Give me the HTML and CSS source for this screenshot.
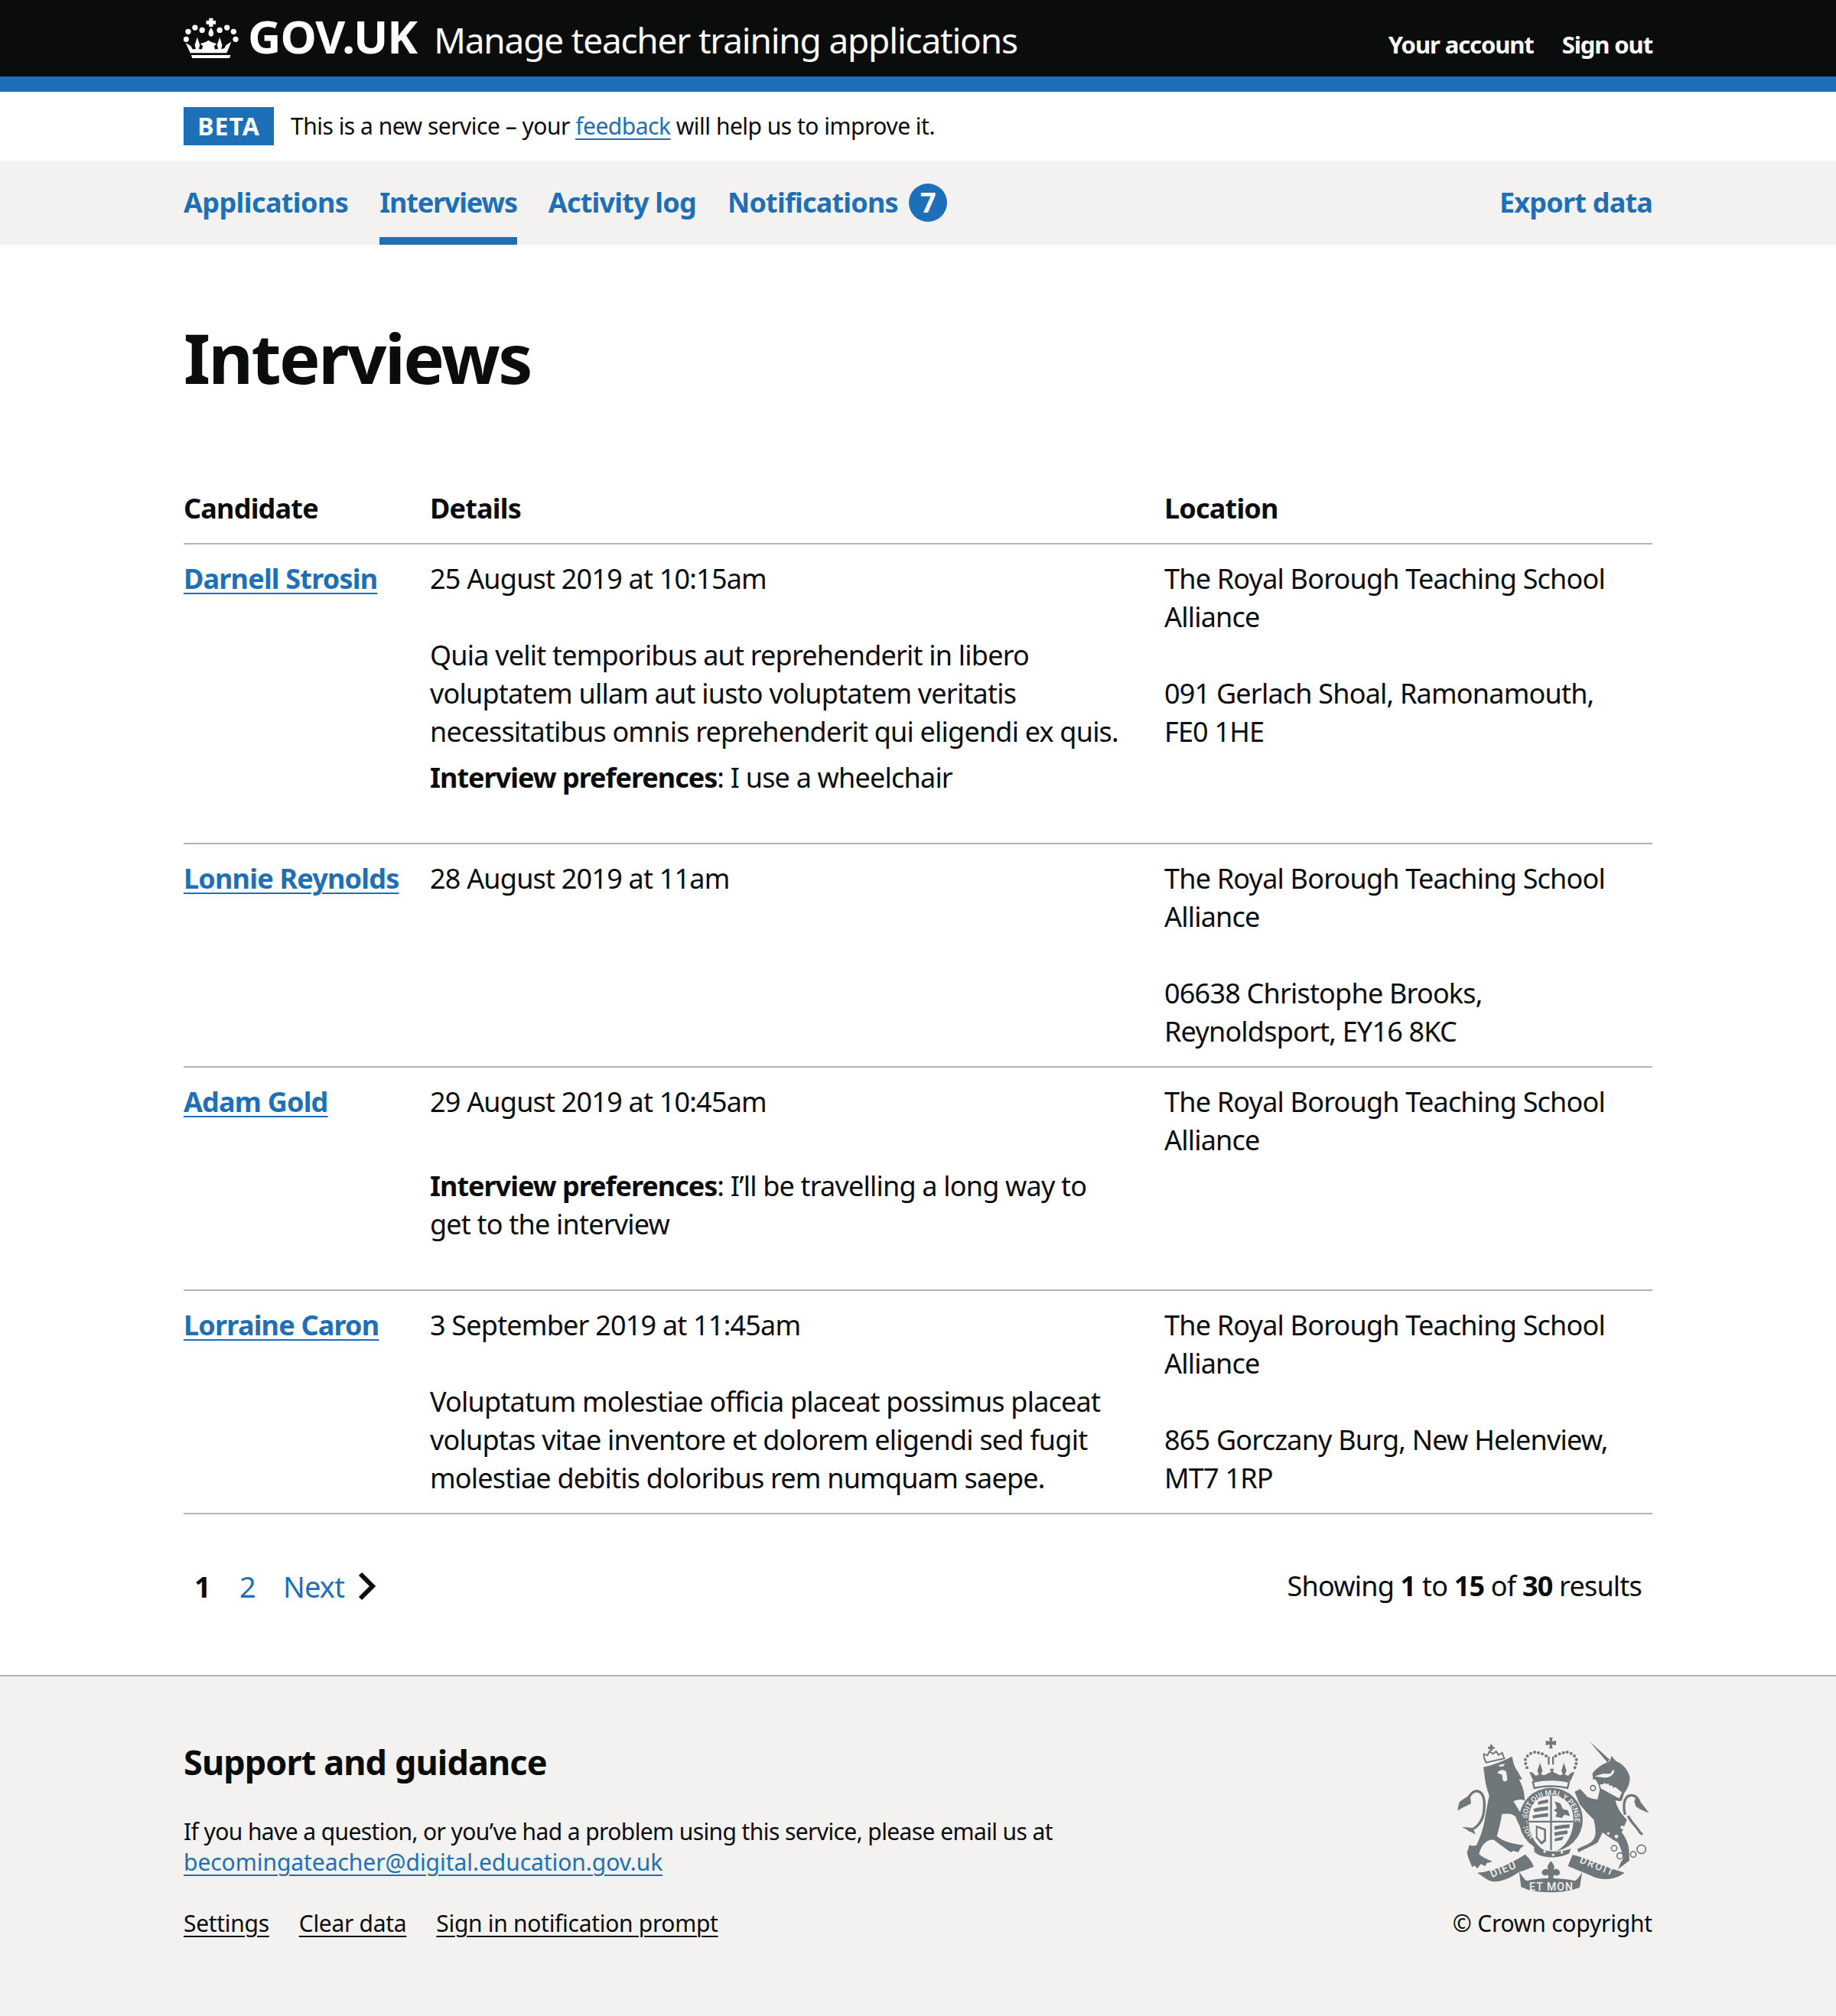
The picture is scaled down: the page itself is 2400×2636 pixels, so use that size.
FILE: index.html
```html
<!DOCTYPE html>
<html lang="en">
<head>
  <meta charset="UTF-8">
  <title>Interviews</title>
  <link rel="stylesheet" href="styles.css">
</head>
<body>
  <header class="site-header">
    <div class="wrap header-row">
      <div class="logo">
        <svg class="crown" viewBox="60 30 220 165" width="73" height="55" fill="#fff">
          <path d="M160 35h16v10h11v14h-11v10h-16V59h-11V45h11z"/>
          <path d="M168 72c8 12 10 18 10 24 0 7-5 11-10 11s-10-4-10-11c0-6 2-12 10-24z"/>
          <circle cx="78" cy="88" r="11"/><circle cx="105" cy="72" r="11"/><circle cx="133" cy="82" r="11"/>
          <circle cx="202" cy="82" r="11"/><circle cx="231" cy="72" r="11"/><circle cx="257" cy="88" r="11"/>
          <circle cx="70" cy="118" r="11"/><circle cx="265" cy="118" r="11"/>
          <path d="M68 132l20 12 8 14 12-2-4-16 10-30 10 30-4 16 12 2 4-12-10-10 22-8 10-6 10 6 22 8-10 10 4 12 12-2-4-16 10-30 10 30-4 16 12-2 8-14 20-12-18 44H86z"/>
          <path d="M90 180h155l-4 12H94z"/>
        </svg>
        <span class="logo-text">GOV.UK</span>
        <span class="service-name">Manage teacher training applications</span>
      </div>
      <nav class="account-links">
        <a href="#">Your account</a>
        <a href="#">Sign out</a>
      </nav>
    </div>
  </header>
  <div class="blue-bar"></div>

  <div class="wrap phase-banner">
    <strong class="tag">BETA</strong>
    <span>This is a new service – your <a href="#">feedback</a> will help us to improve it.</span>
  </div>

  <nav class="primary-nav">
    <div class="wrap nav-row">
      <ul class="nav-list">
        <li><a href="#">Applications</a></li>
        <li class="current"><a href="#">Interviews</a></li>
        <li><a href="#">Activity log</a></li>
        <li><a href="#">Notifications</a><span class="count">7</span></li>
      </ul>
      <a class="nav-export" href="#">Export data</a>
    </div>
  </nav>

  <main class="wrap">
    <h1>Interviews</h1>
    <table class="interviews">
      <thead>
        <tr><th class="col-a">Candidate</th><th class="col-b">Details</th><th class="col-c">Location</th></tr>
      </thead>
      <tbody>
        <tr class="row-one">
          <td><a class="name" href="#">Darnell Strosin</a></td>
          <td>
            <p>25 August 2019 at 10:15am</p>
            <p>Quia velit temporibus aut reprehenderit in libero voluptatem ullam aut iusto voluptatem veritatis necessitatibus omnis reprehenderit qui eligendi ex quis.</p>
            <p class="prefs"><strong>Interview preferences</strong>: I use a wheelchair</p>
          </td>
          <td>
            <p>The Royal Borough Teaching School Alliance</p>
            <p>091 Gerlach Shoal, Ramonamouth, FE0 1HE</p>
          </td>
        </tr>
        <tr>
          <td><a class="name" href="#">Lonnie Reynolds</a></td>
          <td><p>28 August 2019 at 11am</p></td>
          <td>
            <p>The Royal Borough Teaching School Alliance</p>
            <p>06638 Christophe Brooks, Reynoldsport, EY16 8KC</p>
          </td>
        </tr>
        <tr class="row-three">
          <td><a class="name" href="#">Adam Gold</a></td>
          <td>
            <p>29 August 2019 at 10:45am</p>
            <p class="prefs-gap"><strong>Interview preferences</strong>: I’ll be travelling a long way to get to the interview</p>
          </td>
          <td><p>The Royal Borough Teaching School Alliance</p></td>
        </tr>
        <tr>
          <td><a class="name" href="#">Lorraine Caron</a></td>
          <td>
            <p>3 September 2019 at 11:45am</p>
            <p>Voluptatum molestiae officia placeat possimus placeat voluptas vitae inventore et dolorem eligendi sed fugit molestiae debitis doloribus rem numquam saepe.</p>
          </td>
          <td>
            <p>The Royal Borough Teaching School Alliance</p>
            <p>865 Gorczany Burg, New Helenview, MT7 1RP</p>
          </td>
        </tr>
      </tbody>
    </table>

    <div class="pagination">
      <div class="pages">
        <span class="page-current">1</span>
        <a href="#">2</a>
        <a href="#">Next</a>
        <svg class="chevron" width="24" height="38" viewBox="0 0 24 38" fill="none" stroke="#0b0c0c" stroke-width="6"><path d="M3 3l16 16L3 35"/></svg>
      </div>
      <p class="results">Showing <strong>1</strong> to <strong>15</strong> of <strong>30</strong> results</p>
    </div>
  </main>

  <footer class="site-footer">
    <div class="wrap footer-row">
      <div class="footer-main">
        <h2>Support and guidance</h2>
        <p>If you have a question, or you’ve had a problem using this service, please email us at<br><a class="email" href="#">becomingateacher@digital.education.gov.uk</a></p>
        <ul class="footer-links">
          <li><a href="#">Settings</a></li>
          <li><a href="#">Clear data</a></li>
          <li><a href="#">Sign in notification prompt</a></li>
        </ul>
      </div>
      <div class="footer-crest">
        <svg class="crest" width="250" height="204" viewBox="130 95 750 612" fill="#6f777b">
          <!-- big crown -->
          <path d="M490 97h14l-3 16 16-3v18l-16-3 3 16h-14l3-16-16 3v-18l16 3z"/>
          <path d="M485 172h7v32h-7zM502 172h7v32h-7z"/>
          <g>
            <circle cx="398" cy="200" r="6"/><circle cx="397" cy="184" r="6"/><circle cx="405" cy="170" r="6"/><circle cx="418" cy="160" r="6"/><circle cx="433" cy="155" r="6"/><circle cx="448" cy="157" r="6"/><circle cx="463" cy="162" r="6"/><circle cx="478" cy="170" r="6"/>
            <circle cx="596" cy="200" r="6"/><circle cx="597" cy="184" r="6"/><circle cx="589" cy="170" r="6"/><circle cx="576" cy="160" r="6"/><circle cx="561" cy="155" r="6"/><circle cx="546" cy="157" r="6"/><circle cx="531" cy="162" r="6"/><circle cx="516" cy="170" r="6"/>
            <circle cx="403" cy="216" r="6"/><circle cx="591" cy="216" r="6"/>
          </g>
          <path d="M412 232l14 4 12 12 12-6-6-14 10-32 10 32-6 14 12 4 28-14-6-12h18l-6 12 28 14 12-4-6-14 10-32 10 32-6 14 12 6 12-12 14-4-16 36H428z"/>
          <path d="M426 272c40-12 102-12 142 0l-6 24c-38-10-92-10-130 0z" fill="#f3f2f1" stroke="#6f777b" stroke-width="7"/>
          <!-- garter and shield -->
          <circle cx="497" cy="420" r="125"/>
          <path d="M497 325c53 0 88 35 88 95 0 70-40 120-88 130-47-10-87-60-87-130 0-60 35-95 87-95z" fill="#f3f2f1"/>
          <path d="M494 325h7v215h-7zM410 424h175v7H410z"/>
          <path d="M446 350c14-6 26-8 40-10v14c-14 2-28 4-38 8zM428 378c20-8 40-8 58-10v14c-18 2-38 6-54 8zM424 404c20-6 44-8 62-10v14c-20 2-42 4-58 8z"/>
          <path d="M512 348l22 8 10 22 20 6 8 22-22-6-10 14-26-6 8-16-14-8 12-10z"/>
          <path d="M438 442l40 14v48l-18 14-22-26z"/>
          <path d="M444 452l26 10v36l-10 8-16-18z" fill="#f3f2f1"/>
          <path d="M510 446c18-4 40-6 60-8v14c-20 2-40 4-58 8zM510 470c18-4 38-6 52-8v14c-16 2-34 4-50 8zM512 494c14-4 26-6 36-8l-8 14c-10 2-20 2-28 6z"/>
          <path id="garter" d="M432 484A93 93 0 1 1 562 484" fill="none"/>
          <text font-family="Roboto, sans-serif" font-size="29" font-weight="500" fill="#f3f2f1"><textPath href="#garter">HONI SOIT QUI MAL Y PENSE</textPath></text>
          <path d="M430 518c35 30 100 34 145 16l-6 18c-40 22-110 22-137-6z"/>
          <g fill="#f3f2f1"><circle cx="472" cy="545" r="5"/><circle cx="506" cy="558" r="5"/><circle cx="540" cy="548" r="5"/></g>
          <!-- lion -->
          <path d="M243 196c-6-12-11-22-9-34l14 6 8-16 14 10 12-10 10 14 14-8 8 22z" fill="none" stroke="#6f777b" stroke-width="6"/>
          <path d="M258 126h10v8h8v8h-8v8h-10v-8h-8v-8h8z"/>
          <path d="M232 214C270 205 310 190 345 172 350 195 352 210 365 228L385 262H372C385 285 392 305 395 345 385 340 370 338 350 348L405 436 398 452 372 440 358 408C345 395 325 395 305 398 300 430 292 460 285 485 310 505 345 515 392 520L378 532 368 548 350 542 340 548C320 535 300 520 275 500 255 495 245 505 230 520 222 530 218 545 215 555 232 570 250 575 268 585L245 590 240 602 222 594 208 612 198 600 188 606C180 585 170 565 168 548L178 518C188 525 198 522 205 520 225 480 235 440 240 405 245 375 250 350 255 325 245 300 238 270 236 240z"/>
          <path d="M290 232c10-10 25-10 32 0l4 30c-4 10-14 10-18 2l-2-18c-6-6-11-8-18-6zM292 206l24-6-4 10-16 2z" fill="#f3f2f1"/>
          <path d="M232 400c8-40 6-86-22-92-20-4-30 17-45 37" fill="none" stroke="#6f777b" stroke-width="10"/>
          <path d="M180 322c-14 10-34 20-42 30-4 10-6 22-6 34 14-14 36-20 52-30z"/>
          <path d="M232 400c-6 30-30 58-58 62" fill="none" stroke="#6f777b" stroke-width="10"/>
          <path d="M190 452l-42-4 28 16 26 14z"/>
          <!-- unicorn -->
          <path d="M648 112l80 73-10 10z"/>
          <path d="M660 238C672 222 690 205 728 190L735 170 752 190C775 200 795 215 806 250 808 275 800 295 785 315L775 345C765 350 758 345 750 345 755 370 770 395 795 420 788 440 780 455 775 470 790 490 800 510 803 535L805 580 785 595 760 615 770 590 782 570C775 545 768 525 760 510 745 500 725 490 700 470L680 510C655 525 630 535 605 548L600 535C620 525 640 518 652 510 665 500 672 485 672 470 672 450 668 435 665 420L640 395 610 360 590 310 612 300 640 330C655 338 670 340 680 340L690 295 672 262H662z"/>
          <path d="M668 250l32-10h30l12-18 3 10c-7 16-20 23-40 23z" fill="#f3f2f1"/>
          <path d="M686 280l16-2 4-8 8 8 10-4 4 10 10-2 4 10 10-2 26 22-12 28-76-42z" fill="#f3f2f1" stroke="#6f777b" stroke-width="5"/>
          <path d="M788 400c-8-26-6-56 8-70 16-12 36-6 48 20" fill="none" stroke="#6f777b" stroke-width="10"/>
          <path d="M830 332c18 14 34 40 52 62-20-8-36-14-52-26l-6-20z"/>
          <path d="M800 405c10 25 36 45 46 65l10 8" fill="none" stroke="#6f777b" stroke-width="10"/>
          <g fill="none" stroke="#6f777b" stroke-width="5">
            <circle cx="662" cy="296" r="10"/><circle cx="652" cy="380" r="11"/>
            <circle cx="745" cy="532" r="11"/><circle cx="768" cy="562" r="12"/><circle cx="820" cy="556" r="11"/><circle cx="852" cy="536" r="17"/>
          </g>
          <g fill="#f3f2f1"><circle cx="777" cy="450" r="7"/><circle cx="754" cy="486" r="7"/><circle cx="722" cy="474" r="5"/></g>
          <!-- motto ribbon -->
          <path d="M208 628c70-6 130-36 188-72 16 14 28 32 34 48l-40 16-16 4c-40 30-100 52-128 30z"/>
          <path d="M372 622c8 14 20 30 30 38 60-14 130-14 190 0 12-10 22-22 28-36l-10 62-30 10c-50 12-120 12-170 0l-30-12z"/>
          <path d="M582 558c60 14 130 50 204 70-40 30-90 32-130 12l-92-38c6-16 12-30 18-44z"/>
          <path d="M497 582c14 16 16 24 10 34 10-6 24-2 26 12-4 12-14 14-24 8l-4 18h-16l-4-18c-10 6-20 4-24-8 2-14 16-18 26-12-6-10-4-18 10-34z"/>
          <g font-family="Roboto, sans-serif" font-weight="500" fill="#f3f2f1">
            <text x="266" y="648" font-size="42" textLength="104" transform="rotate(-22 266 648)">DIEU</text>
            <text x="412" y="697" font-size="42" textLength="171">ET MON</text>
            <text x="608" y="588" font-size="40" textLength="138" transform="rotate(22 608 588)">DROIT</text>
          </g>
        </svg>
        <p>© Crown copyright</p>
      </div>
    </div>
  </footer>
</body>
</html>
```

FILE: styles.css
```css
/* page */
body {
  margin: 0;
  min-height: 100vh;
  display: flex;
  flex-direction: column;
  font-family: "Noto Sans", Arial, sans-serif;
  font-size: 36px;
  line-height: 50px;
  letter-spacing: -0.8px;
  color: #0b0c0c;
  background: #fff;
}

a {
  color: #1d70b8;
  text-decoration-thickness: 2px;
  text-underline-offset: 5px;
}

p {
  margin: 0;
}

.wrap {
  width: 1920px;
  margin: 0 auto;
}

/* header */
.site-header {
  background: #0b0c0c;
  height: 100px;
  color: #fff;
}

.header-row {
  display: flex;
  justify-content: space-between;
  height: 100px;
}

.logo {
  display: flex;
  align-items: baseline;
  padding-top: 10px;
}

.crown {
  align-self: flex-start;
  margin: 12px 11px 0 0;
}

.logo-text {
  font-size: 60px;
  line-height: 75px;
  font-weight: 700;
  letter-spacing: -1px;
  margin-right: 22px;
}

.service-name {
  font-size: 46px;
  line-height: 75px;
  letter-spacing: -1.2px;
}

.account-links {
  display: flex;
  gap: 37px;
  padding-top: 33px;
}

.account-links a {
  color: #fff;
  font-size: 31px;
  line-height: 50px;
  font-weight: 700;
  letter-spacing: -1.1px;
  text-decoration: none;
}

.blue-bar {
  height: 20px;
  background: #1d70b8;
}

/* phase banner */
.phase-banner {
  display: flex;
  align-items: center;
  gap: 22px;
  height: 90px;
  font-size: 30px;
  letter-spacing: -0.5px;
}

.tag {
  background: #1d70b8;
  color: #fff;
  width: 118px;
  height: 50px;
  line-height: 50px;
  text-align: center;
  letter-spacing: 1px;
  font-size: 32px;
}

/* primary nav */
.primary-nav {
  background: #f3f2f1;
  height: 110px;
}

.nav-row {
  display: flex;
  justify-content: space-between;
  height: 110px;
}

.nav-list {
  display: flex;
  gap: 41px;
  margin: 0;
  padding: 0;
  list-style: none;
}

.nav-list li {
  display: flex;
  align-items: center;
  height: 110px;
}

.nav-list li:first-child {
  letter-spacing: -0.6px;
}

.nav-list a,
.nav-export {
  font-weight: 700;
  text-decoration: none;
}

.nav-export {
  line-height: 110px;
}

.nav-list .current {
  box-shadow: inset 0 -10px 0 #1d70b8;
  letter-spacing: -1.2px;
}

.count {
  width: 50px;
  height: 50px;
  margin-left: 14px;
  border-radius: 50%;
  background: #1d70b8;
  color: #fff;
  font-weight: 700;
  text-align: center;
}

/* main */
h1 {
  margin: 0;
  padding: 97px 0 103px;
  font-size: 90px;
  line-height: 100px;
  font-weight: 700;
  letter-spacing: -2.5px;
}

.interviews {
  width: 100%;
  table-layout: fixed;
  border-collapse: collapse;
}

.interviews th,
.interviews td {
  box-sizing: border-box;
  padding: 20px 40px 20px 0;
  text-align: left;
  vertical-align: top;
  border-bottom: 2px solid #b1b4b6;
}

.col-a {
  width: 322px;
}

.col-b {
  width: 960px;
}

.interviews strong {
  letter-spacing: -1px;
}

.interviews td p + p {
  margin-top: 50px;
}

.interviews td p.prefs {
  margin-top: 10px;
  margin-bottom: 40px;
}

.interviews td p.prefs-gap {
  margin-top: 60px;
  margin-bottom: 40px;
  padding-right: 20px;
}

.name {
  font-weight: 700;
}

/* pagination */
.pagination {
  display: flex;
  justify-content: space-between;
  padding: 69px 14px 91px;
}

.pages {
  display: flex;
  align-items: center;
  gap: 36px;
  font-size: 38px;
}

.page-current {
  font-weight: 700;
  margin-right: 2px;
}

.pages a {
  text-decoration: none;
}

.chevron {
  margin-left: -18px;
}

/* footer */
.site-footer {
  flex: 1;
  background: #f3f2f1;
  border-top: 2px solid #b1b4b6;
  font-size: 30px;
  line-height: 40px;
  letter-spacing: -0.6px;
}

.footer-row {
  display: flex;
  justify-content: space-between;
}

.footer-main {
  padding-top: 87px;
}

.site-footer h2 {
  margin: 0 0 46px;
  font-size: 45px;
  line-height: 50px;
  font-weight: 700;
  letter-spacing: -0.9px;
}

.email {
  letter-spacing: -0.05px;
}

.footer-links {
  display: flex;
  gap: 39px;
  margin: 40px 0 0;
  padding: 0;
  list-style: none;
  letter-spacing: -0.3px;
}

.footer-links a {
  color: #0b0c0c;
}

.footer-crest {
  display: flex;
  flex-direction: column;
  align-items: flex-end;
  padding-top: 79px;
  letter-spacing: -0.2px;
}

.crest {
  margin: 0 5px 20px 0;
}
```
